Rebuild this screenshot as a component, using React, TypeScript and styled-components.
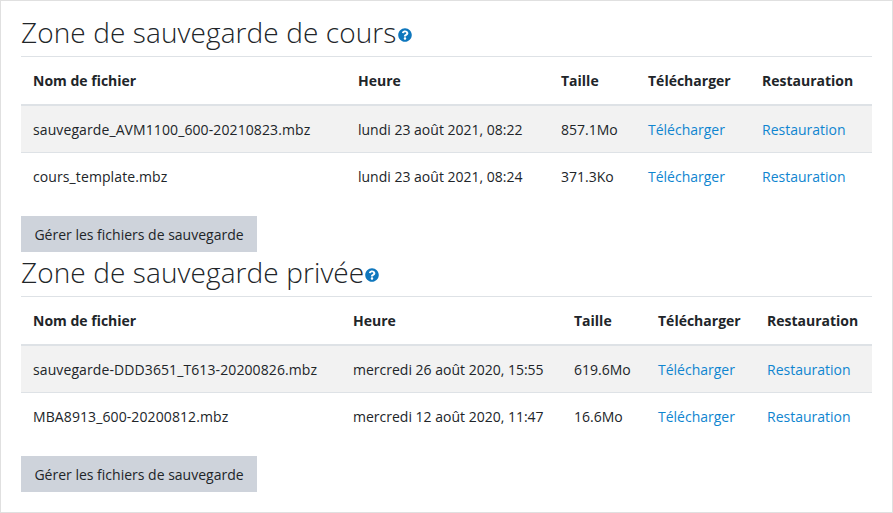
import React from "react";
import styled, { createGlobalStyle } from "styled-components";
import { FaQuestionCircle } from "react-icons/fa";

const GlobalStyle = createGlobalStyle`
  html, body {
    margin: 0;
    padding: 0;
    background: #fff;
  }
  body {
    font-family: "Open Sans", "Noto Sans", "Liberation Sans", sans-serif;
    font-size: 14px;
    color: #212529;
  }
`;

const Page = styled.main`
  box-sizing: border-box;
  width: 893px;
  height: 513px;
  padding: 0 20px;
  border: 1px solid #e0e0e0;
  overflow: hidden;
`;

const Section = styled.section`
  height: 240px;
`;

const Heading = styled.h2`
  box-sizing: border-box;
  display: flex;
  align-items: center;
  height: 56px;
  margin: 0;
  padding-top: 7px;
  font-size: 28px;
  font-weight: 300;
  line-height: 48px;
  letter-spacing: 0.1px;
  color: #212529;
  border-bottom: 1px solid #dee2e6;
  white-space: nowrap;
`;

const HelpIcon = styled(FaQuestionCircle)`
  width: 14px;
  height: 14px;
  margin: 6px 0 0 1px;
  color: #0f77bd;
`;

const Table = styled.table`
  width: 851px;
  table-layout: fixed;
  border-collapse: collapse;
  font-size: 14px;
`;

const HeadCell = styled.th`
  height: 48px;
  padding: 0 12px;
  box-sizing: border-box;
  font-weight: 700;
  text-align: left;
  border-bottom: 2px solid #dee2e6;
  white-space: nowrap;
`;

const Row = styled.tr<{ $shaded?: boolean }>`
  background: ${(props) => (props.$shaded ? "#f2f2f2" : "#fff")};
  border-bottom: ${(props) => (props.$shaded ? "1px solid #dee2e6" : "0")};
`;

const Cell = styled.td`
  height: 47px;
  padding: 2px 12px 0;
  box-sizing: border-box;
  white-space: nowrap;
`;

const NameCell = styled(Cell)`
  letter-spacing: 0.1px;
`;

const TableLink = styled.a`
  color: #0f85d0;
  text-decoration: none;
`;

const ManageButton = styled.button`
  display: block;
  width: 236px;
  height: 36px;
  margin-top: 17px;
  padding: 0;
  border: 0;
  border-radius: 0;
  background: #ced3db;
  color: #212529;
  font: inherit;
  text-align: center;
`;

type BackupFile = { name: string; time: string; size: string };

type Area = {
  title: string;
  columns: number[];
  files: BackupFile[];
};

const areas: Area[] = [
  {
    title: "Zone de sauvegarde de cours",
    columns: [325, 203, 87, 114, 122],
    files: [
      { name: "sauvegarde_AVM1100_600-20210823.mbz", time: "lundi 23 août 2021, 08:22", size: "857.1Mo" },
      { name: "cours_template.mbz", time: "lundi 23 août 2021, 08:24", size: "371.3Ko" },
    ],
  },
  {
    title: "Zone de sauvegarde privée",
    columns: [320, 221, 84, 109, 117],
    files: [
      { name: "sauvegarde-DDD3651_T613-20200826.mbz", time: "mercredi 26 août 2020, 15:55", size: "619.6Mo" },
      { name: "MBA8913_600-20200812.mbz", time: "mercredi 12 août 2020, 11:47", size: "16.6Mo" },
    ],
  },
];

const BackupArea = ({ area }: { area: Area }) => (
  <Section>
    <Heading>
      {area.title}
      <HelpIcon />
    </Heading>
    <Table>
      <colgroup>
        {area.columns.map((width, i) => (
          <col key={i} width={width} />
        ))}
      </colgroup>
      <thead>
        <tr>
          <HeadCell>Nom de fichier</HeadCell>
          <HeadCell>Heure</HeadCell>
          <HeadCell>Taille</HeadCell>
          <HeadCell>Télécharger</HeadCell>
          <HeadCell>Restauration</HeadCell>
        </tr>
      </thead>
      <tbody>
        {area.files.map((file, i) => (
          <Row key={file.name} $shaded={i === 0}>
            <NameCell>{file.name}</NameCell>
            <Cell>{file.time}</Cell>
            <Cell>{file.size}</Cell>
            <Cell>
              <TableLink href="#">Télécharger</TableLink>
            </Cell>
            <Cell>
              <TableLink href="#">Restauration</TableLink>
            </Cell>
          </Row>
        ))}
      </tbody>
    </Table>
    <ManageButton>Gérer les fichiers de sauvegarde</ManageButton>
  </Section>
);

export default function App() {
  return (
    <>
      <GlobalStyle />
      <Page>
        {areas.map((area) => (
          <BackupArea key={area.title} area={area} />
        ))}
      </Page>
    </>
  );
}
